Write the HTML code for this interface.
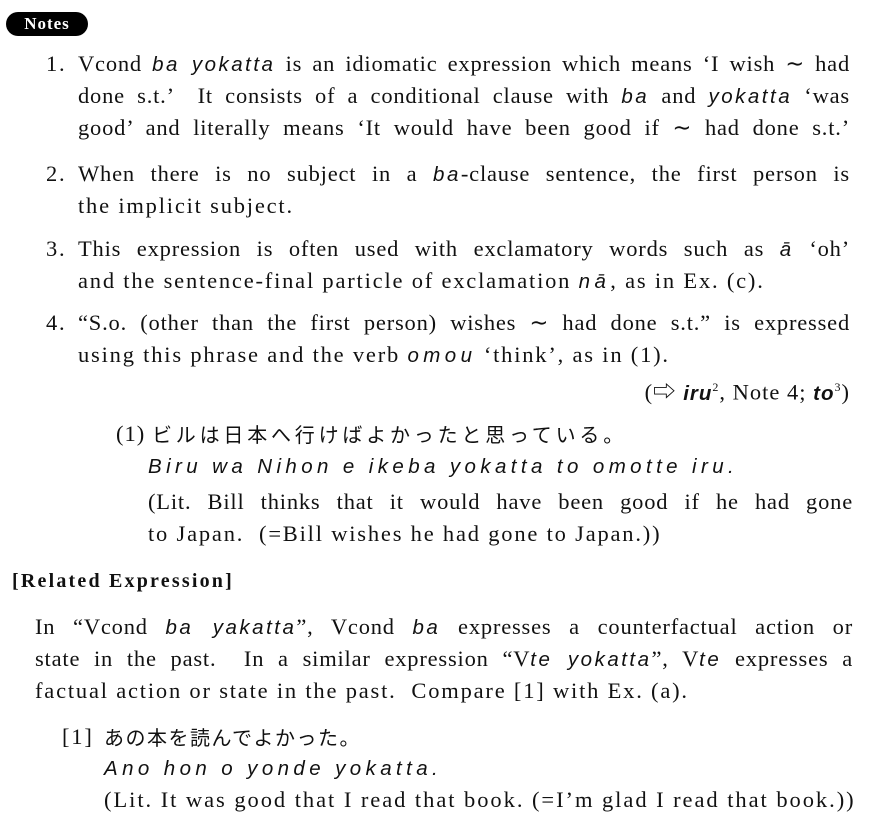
<!DOCTYPE html>
<html><head><meta charset="utf-8"><style>
body{margin:0;width:872px;height:819px;background:#fff;position:relative;overflow:hidden;font-family:"Liberation Serif","Noto Serif CJK SC",serif;font-size:22.5px;letter-spacing:1.8px;color:#111}
.l{position:absolute;height:26px;line-height:26px;white-space:nowrap}
.j{text-align:justify;text-align-last:justify;letter-spacing:0.8px}
.j i{letter-spacing:2.5px}
i{font-family:"Liberation Sans",sans-serif;font-size:20.5px;letter-spacing:4.4px}
.jp{font-family:"Noto Sans CJK JP",sans-serif;font-size:20px;letter-spacing:3.8px}
.badge{position:absolute;left:6px;top:12px;width:82px;height:24px;background:#000;color:#fff;border-radius:12px;font-weight:bold;font-size:17px;letter-spacing:1px;line-height:24px;text-align:center}
</style></head><body>
<div class="badge">Notes</div>
<div class="l" style="left:46px;top:51px">1.</div>
<div class="l j" style="left:78px;top:51px;width:772px">Vcond <i>ba yokatta</i> is an idiomatic expression which means ‘I wish ∼ had</div>
<div class="l j" style="left:78px;top:83px;width:772px">done s.t.’ &nbsp;It consists of a conditional clause with <i>ba</i> and <i>yokatta</i> ‘was</div>
<div class="l j" style="left:78px;top:115px;width:772px">good’ and literally means ‘It would have been good if ∼ had done s.t.’</div>
<div class="l" style="left:46px;top:161px">2.</div>
<div class="l j" style="left:78px;top:161px;width:772px">When there is no subject in a <i>ba</i>-clause sentence, the first person is</div>
<div class="l" style="left:78px;top:193px">the implicit subject.</div>
<div class="l" style="left:46px;top:236px">3.</div>
<div class="l j" style="left:78px;top:236px;width:772px">This expression is often used with exclamatory words such as <i>ā</i> ‘oh’</div>
<div class="l" style="left:78px;top:268px">and the sentence-final particle of exclamation <i>nā</i>, as in Ex. (c).</div>
<div class="l" style="left:46px;top:310px">4.</div>
<div class="l j" style="left:78px;top:310px;width:772px">“S.o. (other than the first person) wishes ∼ had done s.t.” is expressed</div>
<div class="l" style="left:78px;top:342px">using this phrase and the verb <i>omou</i> ‘think’, as in (1).</div>
<div class="l" style="right:22px;top:374px;letter-spacing:1px">(⇨ <b><i style="letter-spacing:1px">iru</i></b><sup style="font-size:12px">2</sup>, Note 4; <b><i style="letter-spacing:1px">to</i></b><sup style="font-size:12px">3</sup>)</div>
<div class="l" style="left:116px;top:421px;letter-spacing:1px">(1)</div>
<div class="l jp" style="left:152px;top:421px">ビルは日本へ行けばよかったと思っている。</div>
<div class="l" style="left:148px;top:453px"><i>Biru wa Nihon e ikeba yokatta to omotte iru.</i></div>
<div class="l j" style="left:148px;top:489px;width:705px">(Lit. Bill thinks that it would have been good if he had gone</div>
<div class="l" style="left:148px;top:521px">to Japan. &nbsp;(=Bill wishes he had gone to Japan.))</div>
<div class="l" style="left:12px;top:568px;font-weight:bold;font-size:20px;letter-spacing:2.2px">[Related Expression]</div>
<div class="l j" style="left:35px;top:614px;width:818px">In “Vcond <i>ba yakatta</i>”, Vcond <i>ba</i> expresses a counterfactual action or</div>
<div class="l j" style="left:35px;top:646px;width:818px">state in the past. &nbsp;In a similar expression “V<i>te yokatta</i>”, V<i>te</i> expresses a</div>
<div class="l" style="left:35px;top:678px">factual action or state in the past. &nbsp;Compare [1] with Ex. (a).</div>
<div class="l" style="left:62px;top:724px">[1]</div>
<div class="l jp" style="left:104px;top:724px;letter-spacing:1.5px">あの本を読んでよかった。</div>
<div class="l" style="left:104px;top:755px"><i>Ano hon o yonde yokatta.</i></div>
<div class="l" style="left:104px;top:787px;letter-spacing:1.95px">(Lit. It was good that I read that book. (=I’m glad I read that book.))</div>
</body></html>
